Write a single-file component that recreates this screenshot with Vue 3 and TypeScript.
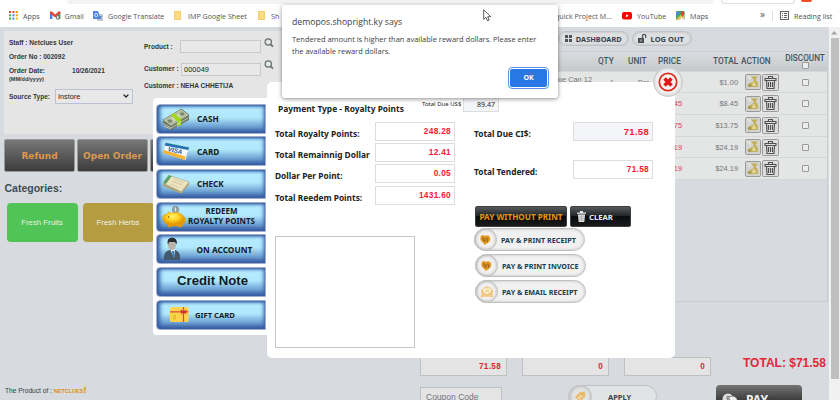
<script setup lang="ts">
interface OrderLine { name: string; qty: string; unit: string; price: string; total: string }

const lines: OrderLine[] = [
  { name: 'pe Can 12', qty: '1', unit: 'Pcs', price: '', total: '$1.00' },
  { name: '', qty: '', unit: '', price: '$8.45', total: '$8.45' },
  { name: '', qty: '', unit: '', price: '$13.75', total: '$13.75' },
  { name: '', qty: '', unit: '', price: '$24.19', total: '$24.19' },
  { name: '', qty: '', unit: '', price: '$24.19', total: '$24.19' },
]

const methods: { key: string; label: string[] }[] = [
  { key: 'cash', label: ['CASH'] },
  { key: 'card', label: ['CARD'] },
  { key: 'check', label: ['CHECK'] },
  { key: 'redeem', label: ['REDEEM', 'ROYALTY POINTS'] },
  { key: 'account', label: ['ON ACCOUNT'] },
  { key: 'credit', label: ['Credit Note'] },
  { key: 'gift', label: ['GIFT CARD'] },
]

const points = [
  { label: 'Total Royalty Points:', value: '248.28' },
  { label: 'Total Remainnig Dollar', value: '12.41' },
  { label: 'Dollar Per Point:', value: '0.05' },
  { label: 'Total Reedem Points:', value: '1431.60' },
]

const payActions = [
  { key: 'receipt', label: 'PAY & PRINT RECEIPT' },
  { key: 'invoice', label: 'PAY & PRINT INVOICE' },
  { key: 'email', label: 'PAY & EMAIL RECEIPT' },
]

const appDots = ['#ea4335', '#ea4335', '#f29900', '#34a853', '#4285f4', '#f29900', '#34a853', '#4285f4', '#fbbc04']
</script>

<template>
  <div class="screen">
    <header class="chrome">
      <div class="omnibox-row">
        <div class="omnibox"></div>
        <div class="ext-pill"></div>
        <div class="avatar"></div>
      </div>
      <nav class="bookmarks">
        <span class="bm apps">
          <svg width="9" height="9" viewBox="0 0 9 9"><rect v-for="(c, i) in appDots" :key="i" :x="(i % 3) * 3.4" :y="Math.floor(i / 3) * 3.3" width="2" height="2" :fill="c" /></svg>
          <span>Apps</span>
        </span>
        <span class="bm gmail">
          <svg width="11" height="9" viewBox="0 0 11 9"><path d="M0 1v7h2.4V4z" fill="#4285f4" /><path d="M10.4 1v7H8V4z" fill="#34a853" /><path d="M0 1.5V1q1-1.6 2.4 0L5.2 3.4 8 1q1.500-1.600 2.400 0v1.500L5.200 6.400 0 2.500z" fill="#ea4335" /><ellipse cx="7.800" cy="6.200" rx="1.500" ry="2.300" fill="#ddd" stroke="#555" stroke-width=".8" /></svg>
          <span>Gmail</span>
        </span>
        <span class="bm translate">
          <svg width="10" height="10" viewBox="0 0 10 10"><rect x="4" y="3" width="6" height="7" fill="#c3cbd5" /><path d="M0 0h5l3 8H0z" fill="#4a84e8" /><circle cx="3.200" cy="4" r="1.600" fill="none" stroke="#fff" stroke-width=".8" /><path d="M6 5.500h3M8.500 5.500l-2 3M6.700 6.700l2 2" stroke="#5777a8" stroke-width=".6" /></svg>
          <span>Google Translate</span>
        </span>
        <span class="bm sheet"><i class="folder"></i><span>IMP Google Sheet</span></span>
        <span class="bm hidden-sh"><i class="folder"></i><span>Sh</span></span>
        <span class="bm quick"><span>quick Project M...</span></span>
        <span class="bm youtube">
          <svg width="10" height="8" viewBox="0 0 10 8"><rect width="10" height="7.500" rx="2" fill="#f00" /><path d="M4 2.200v3l2.700-1.500z" fill="#fff" /></svg>
          <span>YouTube</span>
        </span>
        <span class="bm maps">
          <svg width="9" height="9" viewBox="0 0 9 9"><rect width="8.500" height="9" rx="1" fill="#47a862" /><path d="M0 8.500 8 1v8H1z" fill="#e8c34b" /><path d="M3 9 6 6l2.500 3z" fill="#eee" /><path d="M0 5V1h4z" fill="#4285f4" /><path d="M6.500 6Q4.500 3.500 4.700 2a1.900 1.900 0 0 1 3.800 0Q8.500 3.500 6.500 6" fill="#db4437" /></svg>
          <span>Maps</span>
        </span>
        <span class="bm more">»</span>
        <span class="bm reading">
          <svg width="9" height="9" viewBox="0 0 9 9"><rect x=".5" y=".5" width="8" height="8" fill="none" stroke="#5f6368" /><path d="M2 2.500h1M4 2.500h3M2 4.500h1M4 4.500h3M2 6.500h1M4 6.500h3" stroke="#5f6368" /></svg>
          <span>Reading list</span>
        </span>
      </nav>
    </header>

    <div class="body">
      <main class="page">
        <section class="left">
          <div class="info">
            <div class="info-a">
              <p>Staff : Netclues User</p>
              <p>Order No : 002092</p>
              <div class="date"><span>Order Date:<br /><em>(MM/dd/yyyy)</em></span><span>10/26/2021</span></div>
              <div class="source"><span>Source Type:</span>
                <div class="select"><span>Instore</span><svg width="6" height="4" viewBox="0 0 6 4"><path d="m.6.6 2.400 2.400L5.400.6" fill="none" stroke="#222" stroke-width="1.300" /></svg></div>
              </div>
            </div>
            <div class="info-b">
              <div class="field"><label>Product :</label><div class="box"></div><svg class="lens" width="10" height="10" viewBox="0 0 10 10"><circle cx="4.300" cy="4" r="3.200" fill="none" stroke="#65706c" stroke-width="1.200" /><path d="m6.500 6.300 2.500 2.200" stroke="#65706c" stroke-width="1.700" /></svg></div>
              <div class="field second"><label>Customer :</label><div class="box">000049</div><svg class="lens" width="10" height="10" viewBox="0 0 10 10"><circle cx="4.300" cy="4" r="3.200" fill="none" stroke="#65706c" stroke-width="1.200" /><path d="m6.500 6.300 2.500 2.200" stroke="#65706c" stroke-width="1.700" /></svg></div>
              <p class="customer">Customer : NEHA CHHETIJA</p>
            </div>
          </div>
          <div class="order-buttons"><button>Refund</button><button>Open Order</button><button></button></div>
          <h2>Categories:</h2>
          <div class="cats"><div class="cat green">Fresh Fruits</div><div class="cat gold">Fresh Herbs</div></div>
          <footer>The Product of : <b>NETCLUES<i>!</i></b></footer>
        </section>

        <section class="right">
          <div class="top-actions">
            <span class="pill dash"><svg width="7" height="7" viewBox="0 0 7 7"><path d="M0 0h3v3H0zM4 0h3v3H4zM0 4h3v3H0zM4 4h3v3H4z" fill="#4a5459" /></svg>DASHBOARD</span>
            <span class="pill logout"><svg width="10" height="9" viewBox="0 0 10 9"><rect x="1" y="4" width="6" height="5" fill="#4a4e50" /><path d="M5.500 4V2a1.600 1.600 0 0 1 3.200 0v2" fill="none" stroke="#4a4e50" stroke-width="1.200" /><path d="M4 5.500v2" stroke="#ddd" /></svg>LOG OUT</span>
          </div>
          <div class="orders">
            <div class="tr th"><span></span><span>QTY</span><span>UNIT</span><span>PRICE</span><span>TOTAL</span><span>ACTION</span><span class="disc">DISCOUNT<i class="tick"></i></span></div>
            <div v-for="(l, i) in lines" :key="i" class="tr">
              <span class="name">{{ l.name }}</span><span class="low">{{ l.qty }}</span><span class="low">{{ l.unit }}</span><span class="price">{{ l.price }}</span><span class="total">{{ l.total }}</span>
              <span class="acts">
                <svg width="16" height="16" viewBox="0 0 16 16"><rect x=".5" y=".5" width="15" height="15" rx="1" fill="#d2d2ce" stroke="#999" /><path d="M6 2.500h6.500l-2 3.500q3.500 3 2 7H4q-2-2 .5-3.500L8 7.500l1-1.500z" fill="#c2af56" /><path d="M8 7.500q3 1 3 4.500H7z" fill="#e2d798" /><circle cx="4.500" cy="11.500" r="1.800" fill="#a9a04f" /><path d="M2 3h3v3" fill="none" stroke="#eee" /></svg>
                <svg width="17" height="17" viewBox="0 0 17 17"><rect x=".5" y=".5" width="16" height="16" rx="1" fill="#ddd" stroke="#999" /><path d="M3 4.500h11v2H3zM6.500 4.500v-2h4v2M4.500 6.500h8l-.5 8H5zM6.500 8v5M8.500 8v5M10.500 8v5" fill="none" stroke="#505050" stroke-width="1.100" /></svg>
              </span>
              <span class="ck"><i class="tick"></i></span>
            </div>
            <div class="blank"></div>
          </div>
          <div class="sums"><div class="sum">71.58</div><div class="sum">0</div><div class="sum">0</div><strong>TOTAL: $71.58</strong></div>
          <div class="checkout">
            <div class="coupon">Coupon Code</div>
            <div class="apply"><span class="disc-icon"><svg width="13" height="12" viewBox="0 0 13 12"><path d="m1 6 5-5 5-.5.5 5-5.500 5.500z" fill="#e8bb6b" /><path d="m4 6 3 3M6 4l3 3M4 8l3-4" stroke="#f7eedb" stroke-width=".8" /></svg></span>APPLY</div>
            <div class="pay"><svg width="16" height="14" viewBox="0 0 16 14"><circle cx="6" cy="6" r="5.500" fill="#ddd" /><circle cx="10.500" cy="8" r="5" fill="#eee" stroke="#444" stroke-width=".7" /><path d="M7.500 3.500H5v2.500h2.500v2.500H5" fill="none" stroke="#666" stroke-width=".8" /></svg>PAY</div>
          </div>
        </section>
      </main>
      <aside class="scroll"><svg width="7" height="5" viewBox="0 0 7 5"><path d="M0 4.500h6.400L3.200 1z" fill="#a5a5a5" /></svg><div class="thumb"></div></aside>
    </div>

    <section class="methods">
      <div v-for="m in methods" :key="m.key" class="method" :class="m.key">
        <svg v-if="m.key === 'cash'" width="28" height="22" viewBox="0 0 28 22"><path d="M1 13 20 1l7 6v5L9 22 2 18z" fill="#6f7964" /><path d="M1 12 19 1l8 6L9 18z" fill="#cbd4b8" stroke="#657055" stroke-width=".7" /><path d="m4 12 15-9 5 4-15 9z" fill="none" stroke="#8b967a" stroke-width=".7" /><path d="m9 7 6 6v6l4-2v-6l-7-6z" fill="#a2d819" /><ellipse cx="8" cy="13" rx="2.500" ry="1.800" fill="#7b876b" /><ellipse cx="20" cy="6" rx="2.500" ry="1.800" fill="#7b876b" /><path d="m2 16 7 4 17-10M2 18l7 3" stroke="#dde2d3" stroke-width=".7" fill="none" /></svg>
        <svg v-else-if="m.key === 'card'" width="31" height="22" viewBox="0 0 31 22"><path d="M4 2 30 7l-4 14L1 13z" fill="#f8faff" stroke="#aabccd" stroke-width=".5" /><path d="m4 2 26 5-1 3L3 5z" fill="#2071ad" /><path d="m2 10 24 7-1 4L1 13z" fill="#f5b330" /><text x="6" y="11" transform="rotate(13 6 11)" class="visa">VISA</text></svg>
        <svg v-else-if="m.key === 'check'" width="29" height="20" viewBox="0 0 29 20"><path d="M7 1 28 8 20 18 1 9v3l19 8 8-9V8" fill="#aea57c" /><path d="M7 1 28 8l-8 10L1 9z" fill="#eee5c0" stroke="#aaa17a" stroke-width=".6" /><path d="m7 1 3 1-6 8-3-1z" fill="#5da266" /><path d="m12 5 11 4M10 7l11 4M9 10l9 4" stroke="#c5bb98" stroke-width=".7" /></svg>
        <svg v-else-if="m.key === 'redeem'" width="24" height="22" viewBox="0 0 24 22"><defs><radialGradient id="pig" cx="45%" cy="30%"><stop offset="0" stop-color="#fff66a" /><stop offset=".55" stop-color="#ffd022" /><stop offset="1" stop-color="#e59a05" /></radialGradient></defs><circle cx="13" cy="3.500" r="3.200" fill="#9ba8aa" stroke="#6c797d" stroke-width=".6" /><path d="M13 1.500v4" stroke="#e6e9e9" /><path d="M1 9 5 8 6 6l3 1q8-2 12 3 4 5-1 9l-1 2h-3l-1-1h-5l-2 1H6l-1-3q-4-1-4-4L0 12z" fill="url(#pig)" stroke="#d9970c" stroke-width=".5" /><circle cx="6" cy="11" r=".7" fill="#654400" /></svg>
        <svg v-else-if="m.key === 'account'" width="18" height="24" viewBox="0 0 18 24"><path d="M1 23q-1-9 6-10h5q6 2 5 10z" fill="#43586a" /><path d="M7 12h5l-1 9z" fill="#f3f3f3" /><path d="m9 14 2 0v5l-1 3z" fill="#287bc0" /><ellipse cx="9" cy="7.500" rx="4" ry="5.500" fill="#b7b3ad" /><path d="M5 8Q3 1 9 .5q6 .5 4.500 7L12 5 6 5z" fill="#292f34" /></svg>
        <svg v-else-if="m.key === 'gift'" width="19" height="15" viewBox="0 0 19 15"><rect width="18.500" height="15" rx="1.500" fill="#ffd44c" /><path d="M0 4.800h18.500M13.500 0v15" stroke="#e54736" stroke-width="1.200" /><path d="m13.500 5-2.500-2 .5 3zM13.500 5l2.500-2-.5 3zM13 5l-2 2.500M14 5l2 2.500" fill="#cc2828" stroke="#cc2828" stroke-width=".8" /><path d="M3 9h3M3 11.500h3" stroke="#eb9a34" stroke-width="1.500" stroke-dasharray="1.400 .5" /></svg>
        <span class="mlabel"><span v-for="t in m.label" :key="t">{{ t }}</span></span>
      </div>
    </section>

    <section class="modal">
      <div class="modal-head"><h3>Payment Type - Royalty Points</h3><span>Total Due US$</span><div class="usd">89.47</div></div>
      <div class="modal-cols">
        <div class="mcol">
          <div v-for="p in points" :key="p.label" class="prow"><label>{{ p.label }}</label><div class="val">{{ p.value }}</div></div>
          <div class="note"></div>
        </div>
        <div class="mcol2">
          <div class="prow2"><label>Total Due CI$:</label><div class="val due">71.58</div></div>
          <div class="prow2 tend"><label>Total Tendered:</label><div class="val">71.58</div></div>
          <div class="blacks"><button class="wp">PAY WITHOUT PRINT</button><button class="clear"><svg width="9" height="11" viewBox="0 0 9 11"><path d="M0 1.500h9v1.300H0zM3 0h3v1.500H3zM1 3.500h7L7.300 11H1.700z" fill="#e6e6e6" /><path d="M3 4.500V10M4.500 4.500V10M6 4.500V10" stroke="#777" stroke-width=".5" /></svg>CLEAR</button></div>
          <div v-for="a in payActions" :key="a.key" class="payact" :class="a.key">
            <span class="disc-icon">
              <svg v-if="a.key === 'email'" width="12" height="11" viewBox="0 0 12 11"><path d="m0 4 6-4 6 4v7H0z" fill="#f3cf93" /><path d="M2 2h8v5L6 9 2 7z" fill="#fff2da" stroke="#ebbf75" stroke-width=".6" /><path d="m0 5 6 4 6-4M0 11l4-3M12 11 8 8M4 4h4M4 5.500h4" fill="none" stroke="#e8b560" stroke-width=".7" /></svg>
              <svg v-else width="11" height="11" viewBox="0 0 11 11"><path d="M1 2q2-2 4 0 3-2 5 1 1 3-1 5l-4 3-2-2Q-1 6 1 2" fill="#e49a22" /><path d="M3 3v3l2 1.500V4M6 4l2 1-1 3" fill="none" stroke="#79511b" stroke-width=".8" /></svg>
            </span>{{ a.label }}
          </div>
        </div>
      </div>
    </section>
    <div class="close"><svg width="20" height="20" viewBox="0 0 20 20"><circle cx="10" cy="10" r="8.700" fill="#faf5f4" stroke="#d9301f" stroke-width="1.800" /><path d="m6.500 6.500 7 7m0-7-7 7" stroke="#df1717" stroke-width="3.600" /></svg></div>

    <section class="alert">
      <h1>demopos.shopright.ky says</h1>
      <p>Tendered amount is higher than available reward dollars. Please enter<br />the available reward dollars.</p>
      <button>OK</button>
    </section>
    <svg class="cursor" width="9" height="13" viewBox="0 0 9 13"><path d="M.7.8v9.500l2.200-2 1.600 3.500 1.700-.8-1.500-3.300h3z" fill="#fff" stroke="#333" stroke-width=".8" /></svg>
  </div>
</template>

<style>
body { margin: 0; overflow: hidden; }
</style>

<style scoped>
* { box-sizing: border-box; }
p, h1, h2, h3 { margin: 0; }
button { border: 0; padding: 0; margin: 0; }
svg { display: block; flex: none; }
.screen { position: relative; width: 840px; height: 400px; overflow: hidden; background: #d7dbe0; font-family: "Liberation Sans", sans-serif; display: flex; flex-direction: column; }
.chrome { height: 27px; background: #fff; flex: none; }
.omnibox-row { height: 4px; display: flex; padding-left: 67px; overflow: hidden; }
.omnibox { width: 647px; height: 4px; background: #f1f3f4; border-radius: 0 0 5px 5px; }
.ext-pill { width: 74px; height: 4px; margin-left: 7px; border: 1px solid #ddd; border-top: 0; border-radius: 0 0 5px 5px; }
.avatar { width: 11px; height: 2px; margin-left: 6px; background: #f04b2b; border-radius: 0 0 6px 6px; }
.bookmarks { height: 23px; display: flex; align-items: center; font-family: "Open Sans", sans-serif; font-size: 7.150px; color: #505357; white-space: nowrap; }
.bm { display: flex; align-items: center; gap: 6px; flex: none; }
.apps { width: 41px; margin-left: 9px; gap: 5px; }
.gmail { width: 43px; gap: 3.500px; }
.translate { width: 81px; gap: 5px; }
.sheet { width: 84px; gap: 7px; }
.folder { width: 7px; height: 9px; background: #fbdc82; border: 1px solid #f3cd68; }
.hidden-sh { width: 296px; }
.quick { width: 67px; margin-left: 1px; }
.youtube { width: 54px; gap: 5px; }
.maps { width: 84px; gap: 5px; }
.more { width: 12px; font-size: 10px; margin-top: -3px; }
.reading { border-left: 1px solid #ddd; padding-left: 7px; height: 10px; gap: 5px; }

.body { height: 373px; display: flex; }
.page { width: 829px; display: flex; padding: 4px 0 0 4px; }
.left { width: 409px; display: flex; flex-direction: column; }
.info { height: 103px; width: 409px; background: #e5e5e5; display: flex; font-weight: bold; font-size: 6.550px; color: #30373c; padding: 7px 0 0 5px; white-space: nowrap; flex: none; }
.info-a { width: 135px; }
.info-a p { height: 14.300px; line-height: 9px; }
.date { display: flex; height: 21.500px; line-height: 8px; padding-top: 0.500px; }
.date > span:first-child { width: 63px; }
.date em { font-style: normal; font-size: 5.500px; }
.source { display: flex; align-items: center; height: 16px; }
.source > span { width: 46px; }
.select { width: 78px; height: 15px; border: 1px solid #bac2ce; background: #e8e8e8; display: flex; align-items: center; justify-content: space-between; padding: 0 3px 0 2px; font-weight: normal; font-size: 7.300px; color: #222; }
.field { display: flex; align-items: center; height: 13px; margin-top: 2px; }
.field label { width: 35.500px; padding-bottom: 1px; }
.field .box { width: 81px; height: 13px; border: 1px solid #c9c9c9; background: #e8e8e8; font-weight: normal; font-size: 7.500px; line-height: 11px; padding-left: 2px; color: #222; }
.lens { margin: -8px 0 0 3px; }
.second { margin-top: 9.500px; }
.second label { width: 37px; }
.second .box { width: 79.500px; }
.customer { margin-top: 5px; line-height: 10px; }
.order-buttons { display: flex; gap: 2px; margin-top: 5px; flex: none; }
.order-buttons button { width: 71px; height: 33px; border-radius: 2px; background: linear-gradient(#787878, #3c3c3c); border: 1px solid #999; color: #dc994c; font: bold 9px "DejaVu Sans", sans-serif; }
h2 { font-size: 10.500px; color: #3f4a52; line-height: 14px; margin-top: 9px; padding-left: .5px; }
.cats { display: flex; gap: 5px; padding: 8px 0 0 3px; flex: none; }
.cat { width: 71px; height: 39px; border-radius: 4px; color: #edf0e6; font-size: 7.800px; display: flex; align-items: center; justify-content: center; padding-right: 1px; }
.green { background: #50c456; }
.gold { background: #b69c40; }
footer { margin-top: 143px; padding-left: 1px; font-size: 6.600px; color: #343a40; line-height: 10px; }
footer b { font-size: 5.500px; color: #dc8b20; }
footer i { font-size: 9px; font-style: normal; }

.right { width: 416px; display: flex; flex-direction: column; padding-left: 7px; }
.top-actions { display: flex; height: 20px; padding-left: 138px; gap: 3px; flex: none; }
.pill { height: 15px; border-radius: 8px; border: 1px solid #bfc3c6; box-shadow: inset 0 0 2px #aaa; background: #dedfe0; display: flex; align-items: center; justify-content: center; gap: 3.500px; font: bold 7.350px "Noto Sans", sans-serif; color: #35434d; }
.dash { width: 71px; }
.logout { width: 60px; font-size: 7.500px; padding-right: 3px; }
.orders { width: 408px; height: 251px; border: 1px solid #c9cdd1; display: flex; flex-direction: column; flex: none; }
.tr { display: grid; grid-template-columns: 174px 28px 32px 47px 39px 42px 1fr; align-items: center; height: 21.700px; background: #e4e5e5; border-bottom: 1px solid #d4d6d7; font-size: 7.400px; color: #72777a; flex: none; }
.th { height: 19.700px; background: linear-gradient(#d8dcde, #cfd2d4 55%, #c6c9cb); font: 500 8.300px Roboto, sans-serif; color: #46545d; white-space: nowrap; }
.th span:nth-child(2) { padding-left: 3px; }
.th span:nth-child(3) { padding-left: 5px; }
.th span:nth-child(4) { padding-left: 3px; }
.th span:nth-child(5) { padding-left: 11px; }
.disc { display: flex; flex-direction: column; align-items: center; font-size: 8.200px; line-height: 8px; }
.tick { width: 7px; height: 7px; border: 1px solid #999; border-radius: 1px; background: #ececec; display: block; }
.name { text-align: right; padding-right: 3px; margin-top: -6px; }
.low { padding: 0 0 0 15px; font-size: 6.800px; }
.price { color: #e04050; text-align: right; padding-right: 20px; }
.total { text-align: right; padding-right: 3px; }
.acts { display: flex; align-items: center; gap: 1px; padding-left: 4px; }
.ck { display: flex; justify-content: center; padding-left: 1px; }
.blank { flex: 1; }
.sums { display: flex; gap: 15px; height: 20px; margin: 55px 0 0 0; align-items: flex-start; white-space: nowrap; flex: none; }
.sum { width: 87px; height: 19px; border: 1px solid #bec0c1; background: #e4e4e4; color: #dd2635; font: bold 8.200px/18px "Liberation Sans", sans-serif; letter-spacing: .3px; text-align: right; padding-right: 5px; }
.sums strong { font-size: 12px; line-height: 12px; color: #df2938; margin-left: 17px; }
.checkout { display: flex; height: 28px; margin-top: 8px; flex: none; }
.coupon { width: 82px; height: 20px; border: 1px solid #bec0c1; background: #e4e4e4; color: #71767a; font-size: 8.500px; line-height: 19px; padding-left: 5px; margin-top: 2px; }
.apply { width: 89px; height: 23px; margin-left: 66px; border: 1px solid #bec1c3; border-radius: 12px; background: #e2e3e4; display: flex; align-items: center; gap: 16px; font: bold 7.500px "Noto Sans", sans-serif; color: #354650; }
.disc-icon { width: 23px; height: 23px; flex: none; border-radius: 50%; border: 1px solid #bfc0c1; box-shadow: inset 0 0 3px #aaa; display: flex; align-items: center; justify-content: center; }
.pay { width: 86px; height: 28px; margin-left: 59px; border-radius: 4px 4px 0 0; background: linear-gradient(#747474, #272727 75%); display: flex; padding: 8px 0 0 6px; gap: 8px; color: #f3f3f3; font: bold 12px/13px "Noto Sans", sans-serif; }
.scroll { width: 11px; background: #f1f1f1; padding: 3px 0 0 2px; }
.thumb { width: 8px; height: 341px; margin-top: 3px; background: #bfbfbf; }

.methods { position: absolute; left: 153px; top: 98px; width: 118px; height: 237px; border-radius: 4px; background: #fff; padding: 5.500px 5px 0 3px; display: flex; flex-direction: column; gap: 2.700px; }
.method { height: 30px; border-radius: 4px 0 0 4px; border: 1px solid #a3acc8; background: linear-gradient(#9bd2ef 0, #b6eaff 18%, #afe8fc 45%, #6fa3d5 76%, #3d5fa2 100%); box-shadow: inset 3px 0 4px #345fa7, inset -1px -1px 4px #345fa7, inset 0 1px 2px #4b77b6; display: flex; align-items: center; padding-left: 5px; color: #101b25; font: bold 8.200px "Noto Sans", sans-serif; flex: none; }
.method svg { width: 28px; }
.mlabel { margin-left: 7px; display: flex; flex-direction: column; align-items: center; white-space: nowrap; }
.redeem svg { width: 25px; }
.redeem .mlabel { margin: -2px 0 0 1px; font-size: 7.950px; line-height: 10px; }
.account svg { width: 20px; }
.account .mlabel { margin-left: 14.500px; font-size: 8.300px; }
.credit .mlabel { margin: -3px 0 0 15px; font: bold 13.200px "Liberation Sans", sans-serif; }
.gift svg { width: 19px; margin-left: 8px; }
.gift .mlabel { margin-left: 6px; font-size: 7.650px; }
.visa { font: italic bold 7px "Liberation Sans", sans-serif; fill: #1d4e93; }

.modal { position: absolute; left: 267px; top: 82px; width: 408px; height: 276px; border-radius: 5px; background: #fff; padding: 13px 0 0 8px; font-family: "Noto Sans", sans-serif; color: #222; white-space: nowrap; }
.modal-head { display: flex; height: 27px; }
.modal-head h3 { width: 142px; padding: 8px 0 0 3px; font-size: 8.400px; line-height: 12px; }
.modal-head > span { width: 46px; padding: 4px 0 0 5px; font-size: 6px; line-height: 10px; }
.usd { width: 36px; height: 17px; background: #f4f5f9; border: 1px solid #ddd; text-align: right; padding-right: 3px; font-size: 7px; line-height: 17px; }
.modal-cols { display: flex; }
.mcol { width: 198px; }
.prow { display: flex; height: 21.200px; }
label { white-space: nowrap; }
.prow label { width: 100px; padding-top: 5px; font: bold 8.350px/14px "Noto Sans", sans-serif; }
.val { width: 80px; height: 19px; border: 1px solid #ddd; color: #fb1834; text-align: right; padding-right: 3px; font: bold 8.300px/17px "Liberation Sans", sans-serif; letter-spacing: .3px; }
.note { width: 140px; height: 112px; margin-top: 29px; border: 1px solid #c5c5c5; }
.prow2 { display: flex; height: 38px; padding-left: 1px; }
.prow2 label { width: 99px; padding-top: 5px; font: bold 8.300px/14px "Noto Sans", sans-serif; }
.due { background: #f4f5f9; font-size: 9.500px; }
.blacks { display: flex; gap: 3px; height: 21px; margin: 8px 0 0 2px; }
.blacks button { height: 21px; border-radius: 2px; background: linear-gradient(#55595c, #23272a 45%, #090b0d 50%, #181a1c); border: 1px solid #3d4042; color: #eee; font: bold 7.700px "Noto Sans", sans-serif; }
.blacks .wp { width: 92px; color: #e59516; font-size: 8.150px; }
.blacks .clear { width: 61px; display: flex; align-items: center; gap: 3px; padding-left: 6px; }
.payact { width: 111px; height: 23px; margin: 1px 0 3px 1px; border-radius: 12px; border: 1px solid #bfc0c1; background: #f1f1f1; box-shadow: inset 0 0 3px #bbb; display: flex; align-items: center; gap: 4px; font: bold 7.200px "Noto Sans", sans-serif; color: #173e50; }
.payact .disc-icon { margin-left: -1px; }
.invoice, .email { margin-left: 2px; }
.close { position: absolute; left: 653px; top: 67px; width: 30px; height: 30px; border-radius: 50%; background: #f0f0f0; border: 1px solid #c8c8c8; box-shadow: inset 0 0 3px #bbb; display: flex; align-items: center; justify-content: center; }

.alert { position: absolute; left: 282px; top: 5px; width: 276px; height: 93px; background: #fff; border-radius: 3px; box-shadow: 0 1px 4px rgba(0, 0, 0, .45); padding: 10px 8px 0 10px; font-family: "Open Sans", sans-serif; color: #3c4043; display: flex; flex-direction: column; white-space: nowrap; }
.alert h1 { font-size: 8.700px; font-weight: normal; line-height: 14px; }
.alert p { font-size: 7.470px; line-height: 12.400px; margin-top: 4px; }
.alert button { width: 39px; height: 20px; margin: 10px 2px 0 0; align-self: flex-end; background: #2977e4; border: 1px solid #fff; outline: 1px solid #5d94e7; border-radius: 3px; color: #fff; font: bold 7px "Open Sans", sans-serif; flex: none; }
.cursor { position: absolute; left: 483px; top: 9px; }
</style>
